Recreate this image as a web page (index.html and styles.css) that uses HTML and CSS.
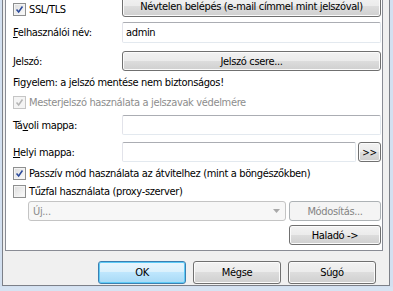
FILE: index.html
```html
<!DOCTYPE html>
<html lang="hu">
<head>
  <meta charset="UTF-8">
  <meta name="viewport" content="width=device-width, initial-scale=1.0">
  <title>Kapcsolat beállításai</title>
  <link rel="stylesheet" href="styles.css">
</head>
<body>
  <div class="window">
    <div class="dialog">
      <div class="panel">
        <div class="row row-ssl">
          <label class="check check-top">
            <span class="box"><svg viewBox="0 0 13 13"><path d="M3 6.5 L5.5 9.5 L10 3"/></svg></span>SSL/TLS
          </label>
          <button class="btn">Névtelen belépés (e-mail címmel mint jelszóval)</button>
        </div>

        <div class="row row-user">
          <span class="label"><u>F</u>elhasználói név:</span>
          <input class="field" type="text" value="admin">
        </div>

        <div class="row row-pass">
          <span class="label"><u>J</u>elszó:</span>
          <button class="btn">Jelszó csere...</button>
        </div>

        <p class="warning">Figyelem: a jelszó mentése nem biztonságos!</p>

        <label class="check disabled row-master">
          <span class="box"><svg viewBox="0 0 13 13"><path d="M3 6.5 L5.5 9.5 L10 3"/></svg></span>Mesterjelszó használata a jelszavak védelmére
        </label>

        <div class="row row-remote">
          <span class="label">Tá<u>v</u>oli mappa:</span>
          <input class="field" type="text">
        </div>

        <div class="row row-local">
          <span class="label"><u>H</u>elyi mappa:</span>
          <div class="local-line">
            <input class="field" type="text">
            <button class="btn btn-browse">&gt;&gt;</button>
          </div>
        </div>

        <label class="check row-passive">
          <span class="box"><svg viewBox="0 0 13 13"><path d="M3 6.5 L5.5 9.5 L10 3"/></svg></span>Passzív mód használata az átvitelhez (mint a böngészőkben)
        </label>

        <label class="check row-firewall">
          <span class="box empty"></span>Tűzfal használata (proxy-szerver)
        </label>

        <div class="proxy-line">
          <div class="combo">
            <span>Új...</span>
            <svg class="arrow" viewBox="0 0 7 4"><path d="M0 0 H7 L3.5 4 Z"/></svg>
          </div>
          <button class="btn btn-side" disabled>Módosítás...</button>
        </div>

        <div class="advanced-line">
          <button class="btn btn-side">Haladó -&gt;</button>
        </div>
      </div>

      <div class="footer">
        <button class="btn btn-footer btn-default">OK</button>
        <button class="btn btn-footer">Mégse</button>
        <button class="btn btn-footer">Súgó</button>
      </div>
    </div>
  </div>
</body>
</html>
```

FILE: styles.css
```css
body {
  margin: 0;
  font-family: 'DejaVu Sans Condensed', 'DejaVu Sans', sans-serif;
  font-size: 11px;
  line-height: 13px;
  letter-spacing: -0.35px;
  color: #000;
  background-color: #d6e3f2;
  overflow: hidden;
}

.window {
  height: 291px;
  padding: 0 3px 1px 2px;
  box-sizing: border-box;
  background-color: #d3e0f0;
}

.dialog {
  height: 290px;
  box-sizing: border-box;
  background-color: #f0f0f0;
  border: 1px solid #7c8088;
  border-top: none;
  padding: 0 6px 0 2px;
}

.panel {
  margin-top: -4px;
  height: 255px;
  box-sizing: border-box;
  background-color: #fff;
  border: 1px solid #898c95;
  border-top: none;
  padding: 0 1px 0 7px;
}

.row {
  display: grid;
  grid-template-columns: 109px 1fr;
  align-items: center;
}

.row-ssl {
  height: 21px;
  align-items: end;
}

.row-user {
  margin-top: 5px;
  height: 21px;
}

.row-pass {
  margin-top: 8px;
  height: 20px;
}

.row-remote {
  margin-top: 6px;
  height: 20px;
}

.row-local {
  margin-top: 7px;
  height: 20px;
}

.label u {
  text-decoration-thickness: 1px;
  text-underline-offset: 1px;
}

.warning {
  margin: 5px 0 0;
}

/* checkboxes */
.check {
  display: flex;
  align-items: center;
  gap: 3px;
  height: 13px;
}

.check-top {
  margin-bottom: 1px;
}

.row-master {
  margin-top: 7px;
}

.row-passive {
  margin-top: 5px;
}

.row-firewall {
  margin-top: 5px;
}

.box {
  width: 13px;
  height: 13px;
  box-sizing: border-box;
  border: 1px solid #8e8f8f;
  background: linear-gradient(135deg, #dcdcdc, #fcfcfc);
  box-shadow: inset 0 0 0 1px #f4f4f4;
  flex: none;
}

.box svg {
  display: block;
  width: 11px;
  height: 11px;
}

.box path {
  fill: none;
  stroke: #2b4a9b;
  stroke-width: 1.8;
}

.check.disabled {
  color: #8d8d8d;
}

.check.disabled .box {
  border-color: #c5c5c5;
  background: #f4f4f4;
}

.check.disabled .box path {
  stroke: #b4b4b4;
}

/* inputs */
.field {
  height: 21px;
  box-sizing: border-box;
  margin: 0;
  border: 1px solid #e3e9ef;
  border-top-color: #abadb3;
  border-left-color: #e2e3ea;
  border-radius: 2px;
  padding: 0 3px;
  font-family: inherit;
  font-size: 11px;
  letter-spacing: -0.35px;
  background-color: #fff;
  outline: none;
}

.row-remote .field,
.row-local .field {
  height: 20px;
}

.local-line {
  display: flex;
  gap: 2px;
}

.local-line .field {
  flex: 1;
  min-width: 0;
}

/* buttons */
.btn {
  height: 21px;
  box-sizing: border-box;
  margin: 0;
  padding: 0;
  font-family: inherit;
  font-size: 11px;
  font-weight: normal;
  letter-spacing: -0.35px;
  color: #000;
  border: 1px solid #707070;
  border-radius: 3px;
  background: linear-gradient(#f2f2f2 0%, #ebebeb 50%, #dddddd 50%, #cfcfcf 100%);
  box-shadow: inset 0 0 0 1px #fbfbfb;
}

.row-pass .btn {
  height: 20px;
}

.btn-browse {
  width: 23px;
  height: 20px;
  font-size: 10px;
}

.btn:disabled {
  color: #838383;
  border-color: #adb2b5;
  background: #f4f4f4;
  box-shadow: none;
}

.proxy-line {
  display: flex;
  gap: 3px;
  margin-top: 3px;
  padding-left: 15px;
  height: 20px;
}

.combo {
  flex: 1;
  display: flex;
  align-items: center;
  justify-content: space-between;
  box-sizing: border-box;
  border: 1px solid #c4c4c4;
  border-radius: 3px;
  background-color: #f7f7f7;
  padding: 0 5px 0 4px;
  color: #8a8a8a;
}

.combo .arrow {
  width: 7px;
  height: 4px;
  fill: #a9a9a9;
}

.btn-side {
  width: 92px;
  height: 20px;
}

.advanced-line {
  display: flex;
  justify-content: flex-end;
  margin-top: 4px;
}

/* dialog buttons */
.footer {
  display: flex;
  justify-content: flex-end;
  gap: 7px;
  margin-top: 10px;
  padding-right: 7px;
}

.btn-footer {
  width: 88px;
  height: 23px;
}

.btn-default {
  border-color: #3c7fb1;
  background: linear-gradient(#eaf6fd 0%, #d9f0fc 50%, #bee6fd 50%, #a7d9f5 100%);
  box-shadow: inset 0 0 0 1px #5ecbf6;
}
```
